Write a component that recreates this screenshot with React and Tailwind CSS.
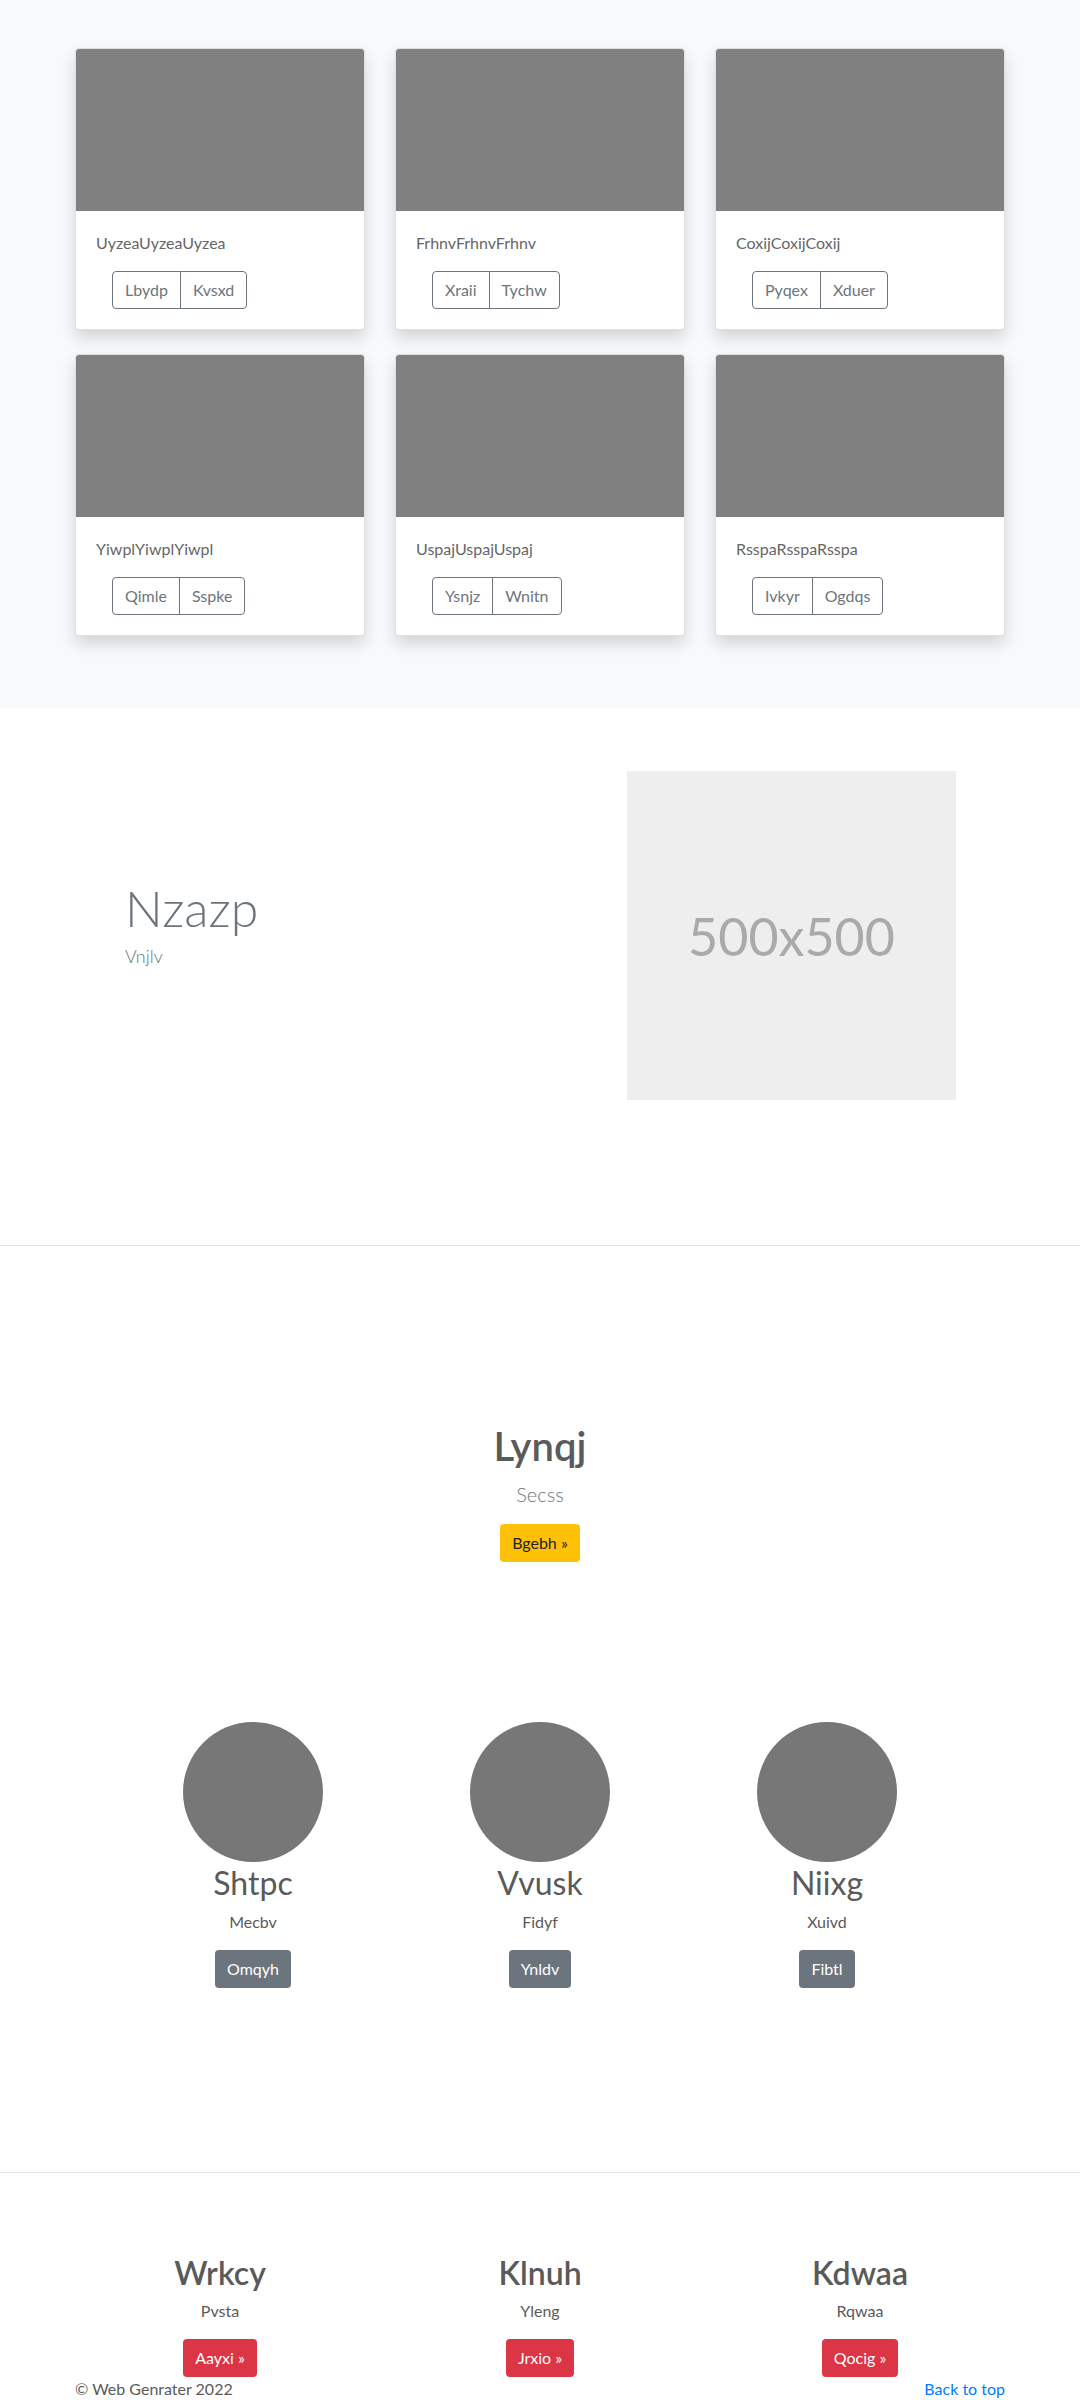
const cards = [
  { title: 'UyzeaUyzeaUyzea', a: 'Lbydp', b: 'Kvsxd' },
  { title: 'FrhnvFrhnvFrhnv', a: 'Xraii', b: 'Tychw' },
  { title: 'CoxijCoxijCoxij', a: 'Pyqex', b: 'Xduer' },
  { title: 'YiwplYiwplYiwpl', a: 'Qimle', b: 'Sspke' },
  { title: 'UspajUspajUspaj', a: 'Ysnjz', b: 'Wnitn' },
  { title: 'RsspaRsspaRsspa', a: 'Ivkyr', b: 'Ogdqs' },
];

const people = [
  { name: 'Shtpc', text: 'Mecbv', btn: 'Omqyh' },
  { name: 'Vvusk', text: 'Fidyf', btn: 'Ynldv' },
  { name: 'Niixg', text: 'Xuivd', btn: 'Fibtl' },
];

const features = [
  { name: 'Wrkcy', text: 'Pvsta', btn: 'Aayxi' },
  { name: 'Klnuh', text: 'Yleng', btn: 'Jrxio' },
  { name: 'Kdwaa', text: 'Rqwaa', btn: 'Qocig' },
];

function Card({ title, a, b }) {
  return (
    <div className="mb-6 flex flex-col rounded border border-black/[.125] bg-white shadow-[0_8px_16px_rgba(0,0,0,0.15)]">
      <div className="h-[162px] rounded-t-[3px] bg-[#808080]" />
      <div className="p-5">
        <p className="mb-4 text-base leading-6 text-[#666]">{title}</p>
        <div className="ml-4 flex">
          <button className="rounded-l border border-[#6c757d] px-3 py-1.5 text-base leading-6 text-[#6c757d]">
            {a}
          </button>
          <button className="-ml-px rounded-r border border-[#6c757d] px-3 py-1.5 text-base leading-6 text-[#6c757d]">
            {b}
          </button>
        </div>
      </div>
    </div>
  );
}

export default function App() {
  return (
    <div className="min-h-[2400px] bg-white font-['Lato','Noto_Sans',sans-serif] text-base leading-6 text-[#5a5a5a]">
      {/* Album */}
      <section className="bg-[#f8f9fa] py-12">
        <div className="mx-auto grid w-[960px] grid-cols-3 gap-x-[30px] px-[15px]">
          {cards.map((c) => (
            <Card key={c.title} {...c} />
          ))}
        </div>
      </section>

      {/* Featurette */}
      <section className="pt-[63px]">
        <div className="mx-auto flex w-[960px] items-start px-[15px]">
          <div className="flex-1 pl-[50px] pt-[107px]">
            <h2 className="text-[50px] font-light leading-[1.2] text-[#6c757d]">Nzazp</h2>
            <p className="mt-[5px] text-[18px] font-light leading-[1.5] text-[#6c757d]">Vnjlv</p>
          </div>
          <div className="mr-[49px] flex h-[329px] w-[329px] items-center justify-center bg-[#eee]">
            <span className="text-[52px] leading-none text-[#aaa]">500x500</span>
          </div>
        </div>
      </section>

      <hr className="mt-[145px] border-0 border-t border-black/10" />

      {/* Jumbotron */}
      <section className="pt-[176px] text-center">
        <h1 className="text-[40px] font-semibold leading-[1.2]">Lynqj</h1>
        <p className="mt-[9px] text-[20px] font-light leading-[1.5] text-[#6c757d]">Secss</p>
        <button className="mt-[15px] rounded bg-[#ffc107] px-3 py-1.5 text-base leading-[26px] text-[#212529]">
          Bgebh »
        </button>
      </section>

      {/* Marketing */}
      <section className="mx-auto mt-[160px] grid w-[861px] grid-cols-3">
        {people.map((p) => (
          <div key={p.name} className="flex flex-col items-center text-center">
            <div className="h-[140px] w-[140px] rounded-full bg-[#777]" />
            <h2 className="mb-2 mt-0.5 text-[32px] font-normal leading-[1.2]">{p.name}</h2>
            <p className="mb-4">{p.text}</p>
            <button className="rounded bg-[#6c757d] px-3 py-1.5 text-base leading-[26px] text-white">
              {p.btn}
            </button>
          </div>
        ))}
      </section>

      <hr className="mt-[184px] border-0 border-t border-black/10" />

      {/* Features */}
      <section className="mx-auto grid w-[960px] grid-cols-3 pt-[81px]">
        {features.map((f) => (
          <div key={f.name} className="flex flex-col items-center text-center">
            <h2 className="mb-1.5 text-[32px] font-semibold leading-[1.2]">{f.name}</h2>
            <p className="mb-4">{f.text}</p>
            <button className="rounded bg-[#dc3545] px-3 py-1.5 text-base leading-[26px] text-white">
              {f.btn} »
            </button>
          </div>
        ))}
      </section>

      <footer className="mx-auto flex w-[960px] justify-between px-[15px]">
        <p>© Web Genrater 2022</p>
        <a href="#" className="text-[#007bff]">
          Back to top
        </a>
      </footer>
    </div>
  );
}
